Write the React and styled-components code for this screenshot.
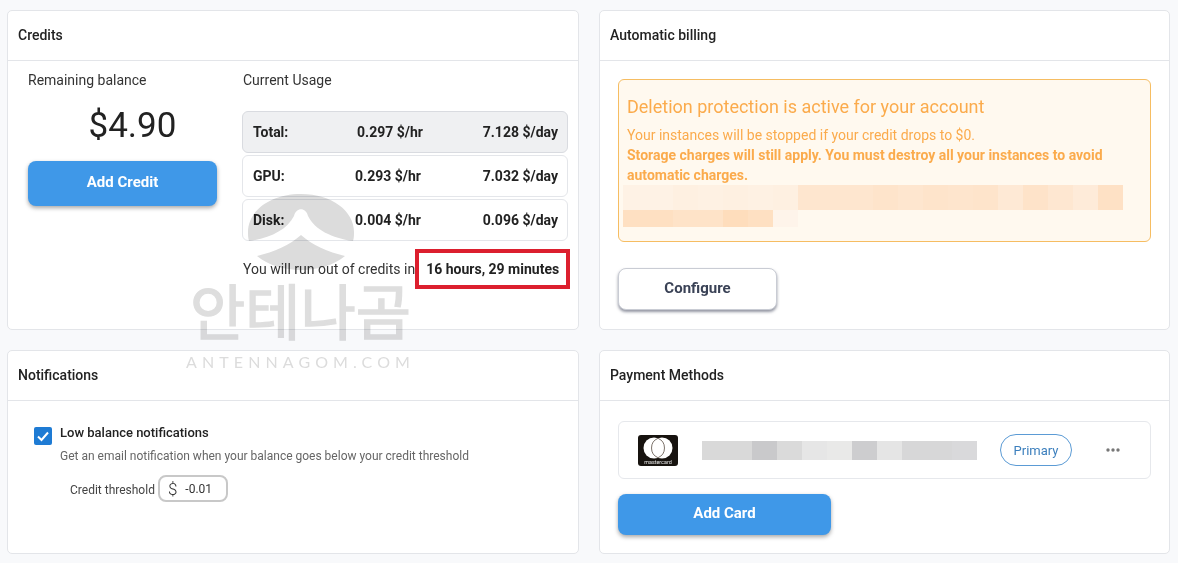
import React from 'react';
import styled, { createGlobalStyle } from 'styled-components';

const usage = [
	{ label: 'Total:', hourly: '0.297 $/hr', daily: '7.128 $/day', total: true },
	{ label: 'GPU:', hourly: '0.293 $/hr', daily: '7.032 $/day' },
	{ label: 'Disk:', hourly: '0.004 $/hr', daily: '0.096 $/day' },
];

const alertRedactTop = [
	'#fef2e5', '#fef2e5', '#fef0e1', '#fef1e3', '#fef0e1', '#fef1e3', '#fef0e1', '#fee6cf', '#fee6cf', '#fee6cf',
	'#fee4cb', '#fee6cf', '#fee4cb', '#fee5cd', '#fee4cb', '#fee9d5', '#fee3c9', '#fee7d1', '#feebd9', '#fee1c5',
];
const alertRedactBottom = ['#fee0c2', '#fee0c2', '#fee3c8', '#fee3c8', '#feddbc', '#fee0c2', '#fef4ea'];
const cardRedact = [
	'#d9d9d9', '#d9d9d9', '#c9c9cb', '#dadada', '#e6e6e6', '#e9e9e8', '#cdcdcf', '#e5e5e5', '#d7d7d8', '#d7d7d8', '#d9d9db',
];

const App = () => {
	return (
		<>
			<GlobalStyle />
			<Page>
				<Card>
					<CardHeader>Credits</CardHeader>
					<CreditsBody>
						<div>
							<Label>Remaining balance</Label>
							<Balance>$4.90</Balance>
							<PrimaryButton>Add Credit</PrimaryButton>
						</div>
						<div>
							<UsageLabel>Current Usage</UsageLabel>
							<UsageTable>
								{usage.map((row) => (
									<UsageRow key={row.label} $total={row.total}>
										<span>{row.label}</span>
										<UsageHourly $total={row.total}>{row.hourly}</UsageHourly>
										<UsageDaily>{row.daily}</UsageDaily>
									</UsageRow>
								))}
							</UsageTable>
							<RunOut>
								<span>You will run out of credits in</span>
								<Highlight>16 hours, 29 minutes</Highlight>
							</RunOut>
						</div>
					</CreditsBody>
				</Card>

				<Card>
					<CardHeader>Automatic billing</CardHeader>
					<BillingBody>
						<Alert>
							<AlertTitle>Deletion protection is active for your account</AlertTitle>
							<AlertText>Your instances will be stopped if your credit drops to $0.</AlertText>
							<AlertStrong>
								Storage charges will still apply. You must destroy all your instances to avoid automatic charges.
							</AlertStrong>
							<AlertRedact $height={25}>
								{alertRedactTop.map((c, i) => (
									<RedactCell key={i} $color={c} />
								))}
							</AlertRedact>
							<AlertRedact $height={17}>
								{alertRedactBottom.map((c, i) => (
									<RedactCell key={i} $color={c} />
								))}
							</AlertRedact>
						</Alert>
						<SecondaryButton>Configure</SecondaryButton>
					</BillingBody>
				</Card>

				<Card>
					<CardHeader>Notifications</CardHeader>
					<NotificationsBody>
						<CheckRow>
							<CheckBox>
								<svg width="14" height="14" viewBox="0 0 14 14" fill="none">
									<path d="M2 7.5 L5.5 11 L12 3.5" stroke="#fff" strokeWidth="2" />
								</svg>
							</CheckBox>
							<div>
								<CheckTitle>Low balance notifications</CheckTitle>
								<CheckHint>Get an email notification when your balance goes below your credit threshold</CheckHint>
								<ThresholdRow>
									<ThresholdLabel>Credit threshold</ThresholdLabel>
									<ThresholdInput>
										<Dollar>$</Dollar>
										<span>-0.01</span>
									</ThresholdInput>
								</ThresholdRow>
							</div>
						</CheckRow>
					</NotificationsBody>
				</Card>

				<Card>
					<CardHeader>Payment Methods</CardHeader>
					<PaymentBody>
						<PaymentRow>
							<svg width="40" height="31" viewBox="0 0 40 31">
								<rect width="40" height="31" rx="3" fill="#17130f" />
								<circle cx="16" cy="13" r="10.5" fill="#fff" />
								<circle cx="24" cy="13" r="10.5" fill="#fff" />
								<path d="M20 3.3 A10.5 10.5 0 0 1 20 22.7 A10.5 10.5 0 0 1 20 3.3 Z" fill="#fff" stroke="#5a4e44" strokeWidth="0.8" />
								<text x="20" y="29" textAnchor="middle" fontSize="5.4" fill="#e8e8e8" fontFamily="Roboto, sans-serif">
									mastercard
								</text>
							</svg>
							<RedactRow $height={19}>
								{cardRedact.map((c, i) => (
									<RedactCell key={i} $color={c} />
								))}
							</RedactRow>
							<Pill>Primary</Pill>
							<svg width="14" height="6" viewBox="0 0 14 6">
								<circle cx="2" cy="3" r="1.7" fill="#777" />
								<circle cx="7" cy="3" r="1.7" fill="#777" />
								<circle cx="12" cy="3" r="1.7" fill="#777" />
							</svg>
						</PaymentRow>
						<AddCardButton>Add Card</AddCardButton>
					</PaymentBody>
				</Card>

				{/* site watermark over the page */}
				<Watermark>
					<svg width="106" height="77" viewBox="0 0 106 77">
						<path
							fill="#dcdcdc"
							d="M53 0 C84 0 106 17 106 38 C106 41 106 44 105 47 C84 44 67 36 60 22 C58 13 48 13 46 22 C39 36 22 44 1 47 C0 44 0 41 0 38 C0 17 22 0 53 0 Z M53 41 C64 51 80 58 97 62 C86 71 70 76 53 76 C36 76 20 71 9 62 C26 58 42 51 53 41 Z"
						/>
					</svg>
					<WatermarkName>안테나곰</WatermarkName>
					<WatermarkSite>ANTENNAGOM.COM</WatermarkSite>
				</Watermark>
			</Page>
		</>
	);
};

export default App;

const GlobalStyle = createGlobalStyle`
	* {
		box-sizing: border-box;
	}

	body {
		margin: 0;
		background: #f8f9fb;
		font-family: Roboto, "Liberation Sans", sans-serif;
		color: #222;
	}
`;

const Page = styled.div`
	position: relative;
	display: grid;
	grid-template-columns: 572px 571px;
	grid-template-rows: 320px 204px;
	gap: 20px;
	width: 1178px;
	height: 563px;
	padding: 10px 8px 0 7px;
	overflow: hidden;
`;

const Card = styled.section`
	display: flex;
	flex-direction: column;
	background: #fff;
	border: 1px solid #e3e5e9;
	border-radius: 5px;
`;

const CardHeader = styled.h2`
	flex: none;
	display: flex;
	align-items: center;
	height: 50px;
	margin: 0;
	padding: 0 10px 2px;
	border-bottom: 1px solid #e3e5e9;
	font-size: 14px;
	font-weight: 500;
	color: #222;
`;

const CreditsBody = styled.div`
	display: grid;
	grid-template-columns: 189px 326px;
	column-gap: 25px;
	padding: 9px 0 0 20px;
`;

const Label = styled.div`
	font-size: 14px;
	line-height: 20px;
	color: #333;
`;

const UsageLabel = styled(Label)`
	padding-left: 1px;
`;

const Balance = styled.div`
	margin-top: 14px;
	padding-left: 20px;
	font-size: 35px;
	line-height: 44px;
	text-align: center;
	color: #222;
`;

const PrimaryButton = styled.button`
	display: block;
	width: 100%;
	height: 45px;
	margin-top: 13px;
	padding: 0 0 4px;
	border: 0;
	border-radius: 8px;
	background: #3f98e8;
	box-shadow: 0 2px 4px rgba(0, 0, 0, 0.35);
	font-family: inherit;
	font-size: 15px;
	font-weight: 700;
	color: #fff;
`;

const AddCardButton = styled(PrimaryButton)`
	width: 213px;
	height: 41px;
	margin-top: 15px;
`;

const SecondaryButton = styled.button`
	display: block;
	width: 159px;
	height: 42px;
	margin-top: 26px;
	padding: 0 0 2px;
	border: 1px solid #c9ccd4;
	border-radius: 8px;
	background: #fff;
	box-shadow: 0 2px 3px rgba(40, 45, 70, 0.5);
	font-family: inherit;
	font-size: 15px;
	font-weight: 700;
	color: #3a4256;
`;

const UsageTable = styled.div`
	display: flex;
	flex-direction: column;
	gap: 2px;
	margin-top: 21px;
`;

const UsageRow = styled.div`
	display: grid;
	grid-template-columns: 85px 100px 1fr;
	align-items: center;
	height: 42px;
	padding: 0 9px 0 10px;
	border: 1px solid ${(p) => (p.$total ? '#d9dbe0' : '#e4e6ea')};
	border-radius: 6px;
	background: ${(p) => (p.$total ? '#eff0f2' : 'transparent')};
	font-size: 14px;
	font-weight: 700;
	color: #222;
`;

const UsageHourly = styled.span`
	padding-left: ${(p) => (p.$total ? 4 : 0)}px;
	text-align: center;
`;

const UsageDaily = styled.span`
	text-align: right;
`;

const RunOut = styled.div`
	display: flex;
	align-items: center;
	justify-content: space-between;
	margin: 8px -2px 0 0;
	padding-left: 1px;
	font-size: 14px;
	white-space: nowrap;
	color: #333;
`;

const Highlight = styled.div`
	flex: none;
	display: flex;
	align-items: center;
	justify-content: center;
	width: 155px;
	height: 40px;
	border: 4px solid #dc1f2e;
	font-weight: 700;
	color: #222;
`;

const BillingBody = styled.div`
	padding: 18px 18px 0;
`;

const Alert = styled.div`
	height: 163px;
	padding: 15px 8px 0;
	border: 1px solid #f6bd62;
	border-radius: 6px;
	background: #fff9ef;
	color: #fbab4c;
`;

const AlertTitle = styled.div`
	margin-bottom: 6px;
	font-size: 18px;
	line-height: 24px;
`;

const AlertText = styled.div`
	font-size: 14px;
	line-height: 20px;
`;

const AlertStrong = styled(AlertText)`
	width: 490px;
	font-weight: 700;
`;

const RedactRow = styled.div`
	display: flex;
	flex: none;
	height: ${(p) => p.$height}px;
`;

const AlertRedact = styled(RedactRow)`
	margin-left: -4px;
`;

const RedactCell = styled.div`
	width: 25px;
	background: ${(p) => p.$color};
`;

const NotificationsBody = styled.div`
	padding: 23px 0 0 26px;
`;

const CheckRow = styled.div`
	display: flex;
	gap: 8px;
`;

const CheckBox = styled.div`
	display: flex;
	align-items: center;
	justify-content: center;
	flex: none;
	width: 18px;
	height: 18px;
	margin-top: 3px;
	border-radius: 2px;
	background: #1e7bd4;
`;

const CheckTitle = styled.div`
	font-size: 13px;
	font-weight: 500;
	line-height: 18px;
	color: #222;
`;

const CheckHint = styled.div`
	margin-top: 6px;
	font-size: 12px;
	line-height: 16px;
	color: #666;
`;

const ThresholdRow = styled.div`
	display: flex;
	align-items: center;
	gap: 3px;
	margin: 11px 0 0 10px;
	font-size: 12px;
	color: #444;
`;

const ThresholdLabel = styled.span`
	padding-top: 2px;
`;

const ThresholdInput = styled.div`
	display: flex;
	align-items: center;
	gap: 8px;
	width: 70px;
	height: 27px;
	padding-left: 8px;
	border: 2px solid #c8c8c8;
	border-radius: 8px;
	background: #fff;
	color: #333;
`;

const Dollar = styled.span`
	font-size: 17px;
	font-weight: 300;
`;

const PaymentBody = styled.div`
	padding: 20px 18px 0;
`;

const PaymentRow = styled.div`
	display: flex;
	align-items: center;
	height: 58px;
	padding-left: 19px;
	border: 1px solid #e6e8ec;
	border-radius: 6px;

	> svg:first-child {
		margin-right: 24px;
	}

	> svg:last-child {
		margin-left: 34px;
	}
`;

const Pill = styled.div`
	display: flex;
	align-items: center;
	justify-content: center;
	width: 72px;
	height: 32px;
	margin-left: 23px;
	border: 1px solid #5b9bd5;
	border-radius: 16px;
	font-size: 13px;
	color: #3c7fbd;
`;

/* sits on top of the cards, multiplied so the text below stays readable */
const Watermark = styled.div`
	position: absolute;
	left: 180px;
	top: 194px;
	display: flex;
	flex-direction: column;
	align-items: center;
	width: 241px;
	mix-blend-mode: multiply;
	pointer-events: none;
`;

const WatermarkName = styled.div`
	margin-top: 5px;
	font-family: "Noto Sans CJK KR", sans-serif;
	font-size: 60px;
	line-height: 66px;
	white-space: nowrap;
	color: #dedede;
	-webkit-text-stroke: 1.5px #dedede;
`;

const WatermarkSite = styled.div`
	margin-top: 10px;
	font-family: Lato, sans-serif;
	font-size: 16px;
	line-height: 20px;
	letter-spacing: 5.1px;
	white-space: nowrap;
	color: #dcdcdc;
`;
